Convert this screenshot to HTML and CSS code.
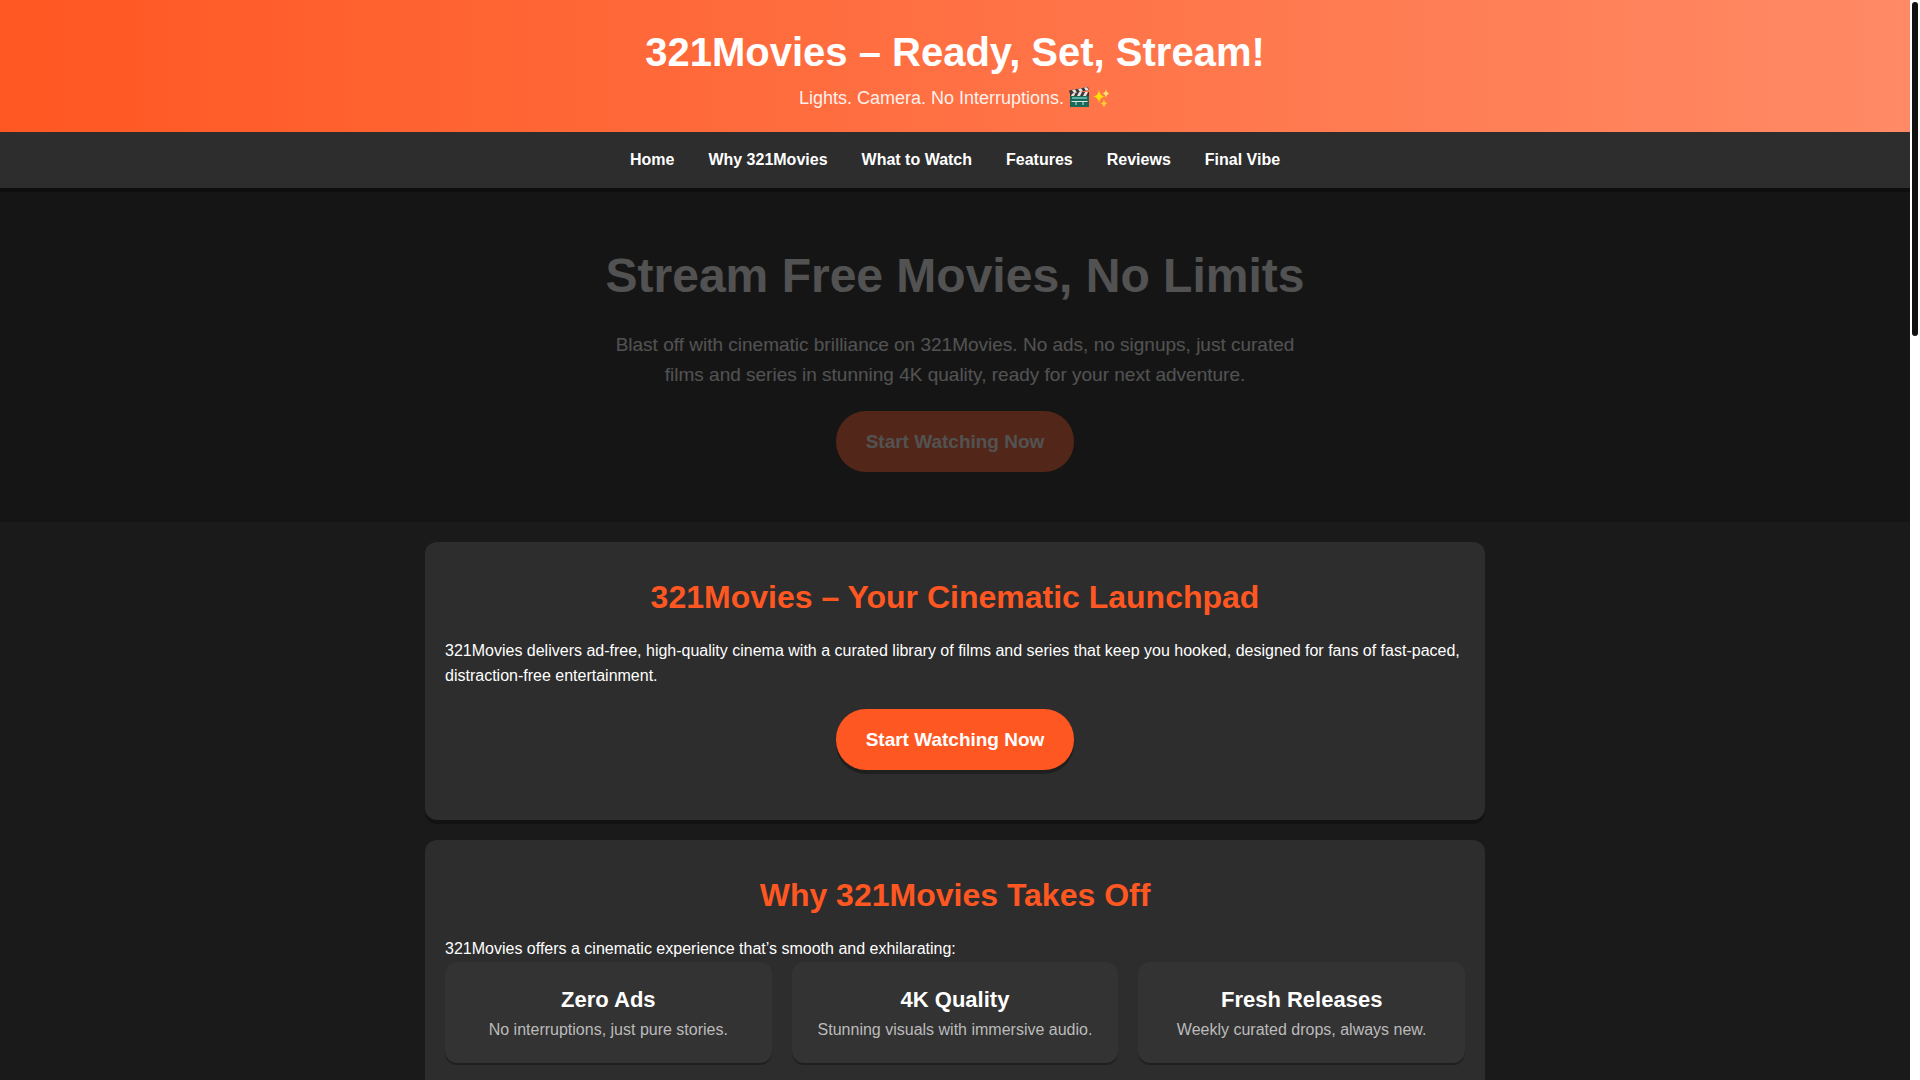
FILE: index.html
```html
<!DOCTYPE html>
<html lang="en">

<head>
	<meta charset="UTF-8">
	<meta name="viewport" content="width=device-width, initial-scale=1.0">
	<title>321Movies – Ready, Set, Stream!</title>
	<link rel="stylesheet" href="styles.css">
</head>

<body>
	<div class="page">
		<header class="site-header">
			<h1>321Movies – Ready, Set, Stream!</h1>
			<p>
				Lights. Camera. No Interruptions.
				<svg class="emoji" viewBox="0 0 21 21" aria-hidden="true">
					<path fill="#00695c" d="M1 8h19v12H1z" />
					<path fill="#263238" d="M1 5h19v4H1z" />
					<path fill="#eee" d="M4 5h3L5 9H2zM10 5h3l-2 4H8zM16 5h3l-2 4h-3z" />
					<path fill="#263238" d="M0 3.5L19 0l1 3L1 7z" />
					<path fill="#eee" d="M3 3l3-.6 2 3L5 6zM9 1.9l3-.6 2 3-3 .6zM15 .8l3-.6 1.6 2.9-2.6.6z" />
					<path fill="#4db6ac" d="M3 10h15v2H3z" />
					<path stroke="#e0f2f1" d="M2.500 14.500h16M7 15v3M14 15v3" />
				</svg><svg class="emoji" viewBox="0 0 21 21" aria-hidden="true">
					<path fill="#ffeb00" d="M9 3q1 6 6 6.500q-5 .5-6 6.500q-1-6-6-6.500q5-.5 6-6.500z" />
					<path fill="#fff176" d="M16 2q.5 4 3.500 4.500q-3 .5-3.500 4.500q-.5-4-3.500-4.500q3-.5 3.500-4.500z" />
					<path fill="#fdd835" d="M14 12q.5 4 3.500 4.500q-3 .5-3.500 4.500q-.5-4-3.500-4.500q3-.5 3.500-4.500z" />
				</svg>
			</p>
		</header>

		<nav class="site-nav">
			<a href="#home">Home</a>
			<a href="#why">Why 321Movies</a>
			<a href="#watch">What to Watch</a>
			<a href="#features">Features</a>
			<a href="#reviews">Reviews</a>
			<a href="#final">Final Vibe</a>
		</nav>

		<section class="hero">
			<div class="hero-content">
				<h2>Stream Free Movies, No Limits</h2>
				<p>Blast off with cinematic brilliance on 321Movies. No ads, no signups, just curated films and series in stunning 4K quality, ready for your next adventure.</p>
				<a class="cta" href="#watch">Start Watching Now</a>
			</div>
		</section>

		<main class="container">
			<section id="home" class="section">
				<h2>321Movies – Your Cinematic Launchpad</h2>
				<p>321Movies delivers ad-free, high-quality cinema with a curated library of films and series that keep you hooked, designed for fans of fast-paced, distraction-free entertainment.</p>
				<a class="cta" href="#watch">Start Watching Now</a>
			</section>

			<section id="why" class="section">
				<h2>Why 321Movies Takes Off</h2>
				<p>321Movies offers a cinematic experience that’s smooth and exhilarating:</p>
				<div class="grid">
					<div class="card">
						<h3>Zero Ads</h3>
						<p>No interruptions, just pure stories.</p>
					</div>
					<div class="card">
						<h3>4K Quality</h3>
						<p>Stunning visuals with immersive audio.</p>
					</div>
					<div class="card">
						<h3>Fresh Releases</h3>
						<p>Weekly curated drops, always new.</p>
					</div>
				</div>
			</section>
		</main>
	</div>

	<div class="scroll-track">
		<div class="scroll-thumb"></div>
	</div>
</body>

</html>
```

FILE: styles.css
```css
* {
	margin: 0;
	padding: 0;
	box-sizing: border-box;
}

body {
	display: flex;
	height: 100vh;
	overflow: hidden;
	font-family: "Liberation Sans", Arial, sans-serif;
	font-size: 16px;
	line-height: 1.6;
	background-color: #1a1a1a;
	color: #fff;
}

.page {
	flex: 1;
	height: 100%;
	overflow: hidden;
}

.site-header {
	padding: 20px;
	text-align: center;
	background: linear-gradient(90deg, #ff5722, #ff8a65);
}

.site-header h1 {
	font-size: 40px;
}

.site-header p {
	font-size: 18px;
	line-height: 28px;
	opacity: 0.9;
}

.emoji {
	width: 21px;
	height: 21px;
	fill: none;
	vertical-align: -4px;
}

.site-nav {
	position: relative;
	z-index: 1;
	display: flex;
	justify-content: center;
	gap: 34px;
	padding: 15px;
	background-color: #2d2d2d;
	box-shadow: 0 4px 0 rgba(0, 0, 0, 0.3);
}

.site-nav a {
	color: #fff;
	font-weight: bold;
	line-height: 26px;
	text-decoration: none;
}

.hero {
	padding: 50px 20px;
	text-align: center;
	background-color: #151515;
}

.hero-content {
	opacity: 0.26;
}

.hero h2 {
	margin-bottom: 15px;
	font-size: 48px;
}

.hero p {
	max-width: 700px;
	margin: 0 auto;
	font-size: 19px;
}

.cta {
	display: block;
	width: fit-content;
	margin: 20px auto 0;
	padding: 15px 30px;
	border-radius: 30px;
	background-color: #ff5722;
	color: #fff;
	font-size: 19px;
	font-weight: bold;
	line-height: 31px;
	text-decoration: none;
}

.container {
	max-width: 1100px;
	margin: 0 auto;
	padding: 0 20px;
}

.section {
	margin: 20px 0;
	padding: 30px 20px;
	border-radius: 12px;
	background-color: #2d2d2d;
	box-shadow: 0 4px 0 rgba(0, 0, 0, 0.3);
}

.section h2 {
	margin-bottom: 15px;
	color: #ff5722;
	font-size: 32px;
	text-align: center;
}

.section .cta {
	margin-bottom: 20px;
	box-shadow: 0 4px 0 rgba(0, 0, 0, 0.3);
}

.grid {
	display: grid;
	grid-template-columns: repeat(auto-fit, minmax(250px, 1fr));
	gap: 20px;
}

.card {
	padding: 20px;
	border-radius: 12px;
	background-color: #333;
	box-shadow: 0 2px 0 rgba(0, 0, 0, 0.3);
	text-align: center;
}

.card h3 {
	font-size: 22px;
}

.card p {
	color: #bbb;
}

.scroll-track {
	width: 10px;
	height: 100%;
	padding: 2px;
	background-color: #fff;
}

.scroll-thumb {
	height: 31%;
	border-radius: 3px;
	background-color: #111;
}
```
